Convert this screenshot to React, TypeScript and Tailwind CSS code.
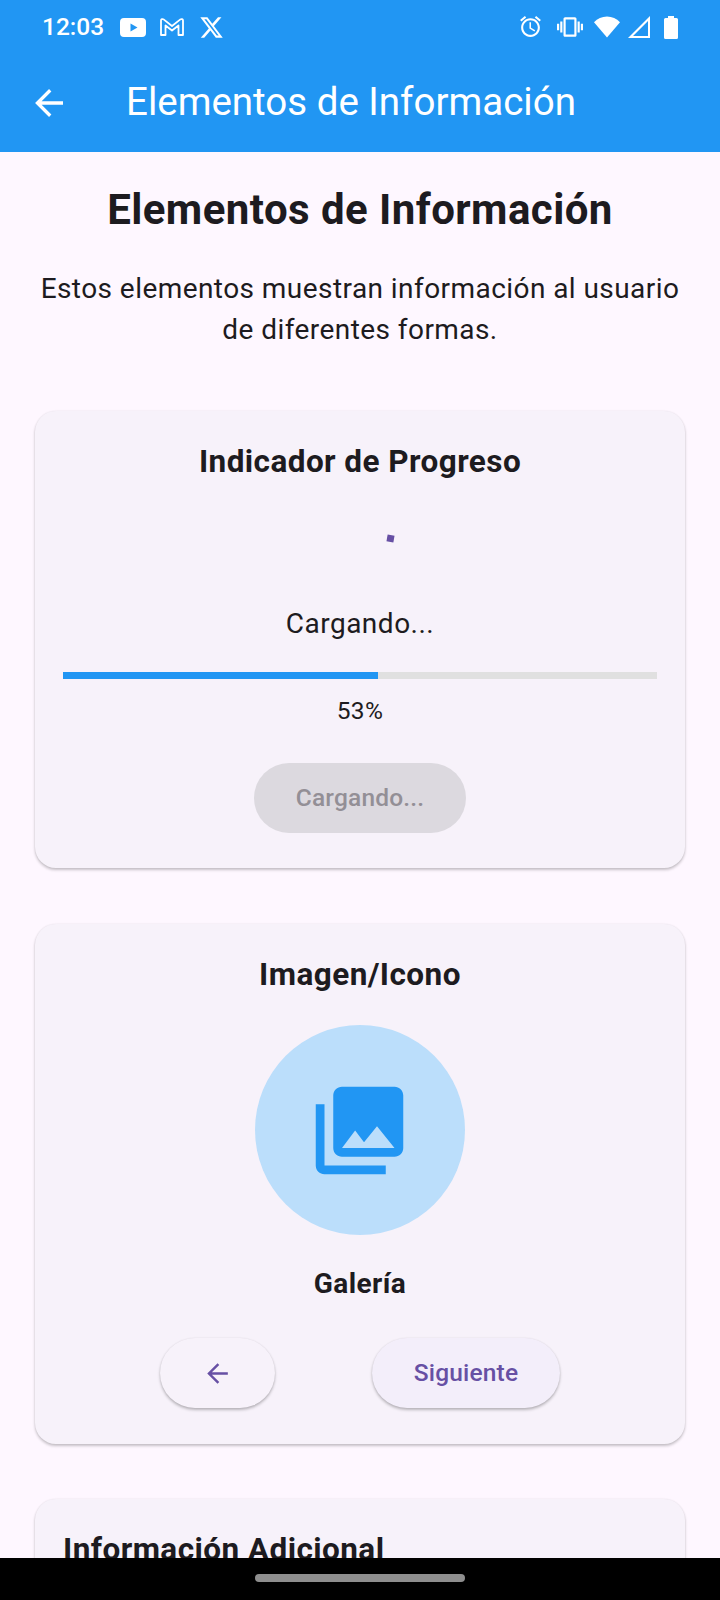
const font = { fontFamily: "Roboto, sans-serif" };

function Card({ children, extra }: { children: React.ReactNode; extra: string }) {
  return (
    <div className={`mx-[35px] rounded-[21px] bg-[#F7F2FA] p-[28px] shadow-[0_2px_3px_rgba(0,0,0,0.22),0_0_2px_rgba(0,0,0,0.08)] ${extra}`}>
      {children}
    </div>
  );
}

function Back({ cls }: { cls: string }) {
  return (
    <svg viewBox="0 0 24 24" className={cls} fill="none" stroke="currentColor" strokeWidth="1.9">
      <path d="M20 12H5.500M12.700 4.700 5.400 12l7.300 7.300" />
    </svg>
  );
}

function StatusBar() {
  return (
    <div className="flex h-[51px] items-center pl-[42px] pr-[42px] pt-[3px] text-white">
      <span className="mt-[1px] w-[78px] text-[24.5px] font-medium leading-none">12:03</span>
      <svg viewBox="0 0 26 19" className="h-[19px] w-[26px]" fill="white">
        <path fillRule="evenodd" d="M4 0h18a4 4 0 0 1 4 4v11a4 4 0 0 1-4 4H4a4 4 0 0 1-4-4V4a4 4 0 0 1 4-4zm6.500 5.500v8l7-4z" />
      </svg>
      <svg viewBox="0 0 24 18" className="ml-[14px] h-[18px] w-[24px]" fill="none" stroke="white" strokeWidth="1.8" strokeLinejoin="round">
        <path d="M1 2.500C1 1.300 2.600.6 3.600 1.400L12 8l8.400-6.600c1-.8 2.600-.1 2.600 1.100V17h-4.500V7.500L12 12.500 5.500 7.500V17H1z" />
      </svg>
      <svg viewBox="0 0 24 24" className="ml-[15px] h-[25px] w-[25px]" fill="white">
        <path d="M18.244 2.250h3.308l-7.227 8.260 8.502 11.240H16.170l-5.214-6.817L4.990 21.750H1.680l7.730-8.835L1.254 2.250H8.080l4.713 6.231zm-1.161 17.520h1.833L7.084 4.126H5.117z" />
      </svg>
      <div className="flex-1" />
      <svg viewBox="0 0 24 24" className="-mt-[1px] h-[25px] w-[25px]" fill="white">
        <path d="M22 5.720l-4.600-3.860-1.290 1.530 4.600 3.860L22 5.720zM7.880 3.390L6.600 1.860 2 5.710l1.290 1.530 4.590-3.850zM12.500 8H11v6l4.750 2.850.75-1.230-4-2.370V8zM12 4c-4.970 0-9 4.030-9 9s4.030 9 9 9 9-4.030 9-9-4.030-9-9-9zm0 16c-3.870 0-7-3.130-7-7s3.130-7 7-7 7 3.130 7 7-3.130 7-7 7z" />
      </svg>
      <svg viewBox="0 0 24 24" className="ml-[14px] h-[26px] w-[26px]" fill="white">
        <path d="M0 15h2V9H0v6zm3 2h2V7H3v10zm19-8v6h2V9h-2zm-3 8h2V7h-2v10zM16.500 3h-9C6.670 3 6 3.670 6 4.500v15c0 .83.67 1.500 1.500 1.500h9c.83 0 1.500-.67 1.500-1.500v-15c0-.83-.67-1.500-1.500-1.500zM16 19H8V5h8v14z" />
      </svg>
      <svg viewBox="0 0 26 22" className="ml-[11px] h-[22px] w-[26px]" fill="white">
        <path d="M13 21.500 0 6.200C3.400 2.600 8 .5 13 .5s9.600 2.100 13 5.700z" />
      </svg>
      <svg viewBox="0 0 22 22" className="ml-[8px] h-[22px] w-[22px]" fill="white">
        <path fillRule="evenodd" d="M22 0v22H0zM20 5 5 20h15z" />
      </svg>
      <svg viewBox="0 0 14 23" className="ml-[14px] h-[23px] w-[14px]" fill="white">
        <path d="M4 0h6v2h2.500A1.500 1.500 0 0 1 14 3.500v18a1.500 1.500 0 0 1-1.500 1.500h-11A1.500 1.500 0 0 1 0 21.500v-18A1.500 1.500 0 0 1 1.500 2H4z" />
      </svg>
    </div>
  );
}

export default function App() {
  return (
    <div style={font} className="relative h-[1600px] w-[720px] overflow-hidden bg-[#FEF7FF] text-[#1D1B20]">
      <header className="h-[152px] bg-[#2196F3] text-white">
        <StatusBar />
        <div className="flex h-[101px] items-center pl-[28px] pt-[2px]">
          <Back cls="h-[42px] w-[42px]" />
          <span className="ml-[56px] text-[38.5px] leading-none">Elementos de Información</span>
        </div>
      </header>

      <h1 className="mt-[33px] text-center text-[42px] font-bold leading-[50px] tracking-[0.4375px]">Elementos de Información</h1>
      <p className="mx-[35px] mt-[33px] text-center text-[28px] leading-[41px] tracking-[0.4375px]">
        Estos elementos muestran información al usuario de diferentes formas.
      </p>

      <Card extra="mt-[61px] flex h-[457px] flex-col items-center">
        <h2 className="mt-[4px] text-[31.5px] font-bold leading-[38px] tracking-[0.4375px]">Indicador de Progreso</h2>
        <div className="mt-[54px] h-[7px] w-[7px] translate-x-[30px] rotate-[10deg] bg-[#6750A4]" />
        <p className="mt-[64px] text-[28px] leading-[36px] tracking-[0.5px]">Cargando...</p>
        <div className="mt-[30px] h-[7px] w-full bg-[#E0E0E0]">
          <div className="h-full bg-[#2196F3]" style={{ width: "53%" }} />
        </div>
        <p className="mt-[17px] text-[24.5px] leading-[30px] tracking-[0.4px]">53%</p>
        <button className="mt-[37px] h-[70px] w-[212px] rounded-full bg-[#DCD9DF] text-[24.5px] font-medium tracking-[0.175px] text-[#938F96]">
          Cargando...
        </button>
      </Card>

      <Card extra="mt-[56px] flex h-[520px] flex-col items-center">
        <h2 className="mt-[4px] text-[31.5px] font-bold leading-[38px] tracking-[0.4375px]">Imagen/Icono</h2>
        <div className="mt-[31px] flex h-[210px] w-[210px] items-center justify-center rounded-full bg-[#BBDEFB] text-[#2196F3]">
          <svg viewBox="0 0 24 24" className="mr-[1px] h-[105px] w-[105px]" fill="currentColor">
            <path d="M22 16V4c0-1.100-.9-2-2-2H8c-1.100 0-2 .9-2 2v12c0 1.100.9 2 2 2h12c1.100 0 2-.9 2-2zm-11-4l2.030 2.710L16 11l4 5H8l3-4zM2 6v14c0 1.100.9 2 2 2h14v-2H4V6H2z" />
          </svg>
        </div>
        <p className="mt-[32px] text-[28px] font-bold leading-[34px] tracking-[0.4375px]">Galería</p>
        <div className="mt-[37px] flex w-full justify-evenly">
          <button className="flex h-[70px] w-[115px] items-center justify-center rounded-full bg-[#F7F2FA] text-[#6750A4] shadow-[0_2px_3px_rgba(0,0,0,0.25),0_0_2px_rgba(0,0,0,0.08)]">
            <Back cls="h-[31px] w-[31px]" />
          </button>
          <button className="h-[70px] w-[188px] rounded-full bg-[#F3EEFA] text-[24.5px] font-medium tracking-[0.175px] text-[#6750A4] shadow-[0_2px_3px_rgba(0,0,0,0.25),0_0_2px_rgba(0,0,0,0.08)]">
            Siguiente
          </button>
        </div>
      </Card>

      <Card extra="mt-[55px] h-[200px]">
        <h2 className="mt-[4px] text-[31.5px] font-bold leading-[38px] tracking-[0.4375px]">Información Adicional</h2>
      </Card>

      <div className="absolute bottom-0 left-0 flex h-[42px] w-full items-start justify-center bg-black pt-[16px]">
        <div className="h-[8px] w-[210px] rounded-full bg-[#8E8E8E]" />
      </div>
    </div>
  );
}
